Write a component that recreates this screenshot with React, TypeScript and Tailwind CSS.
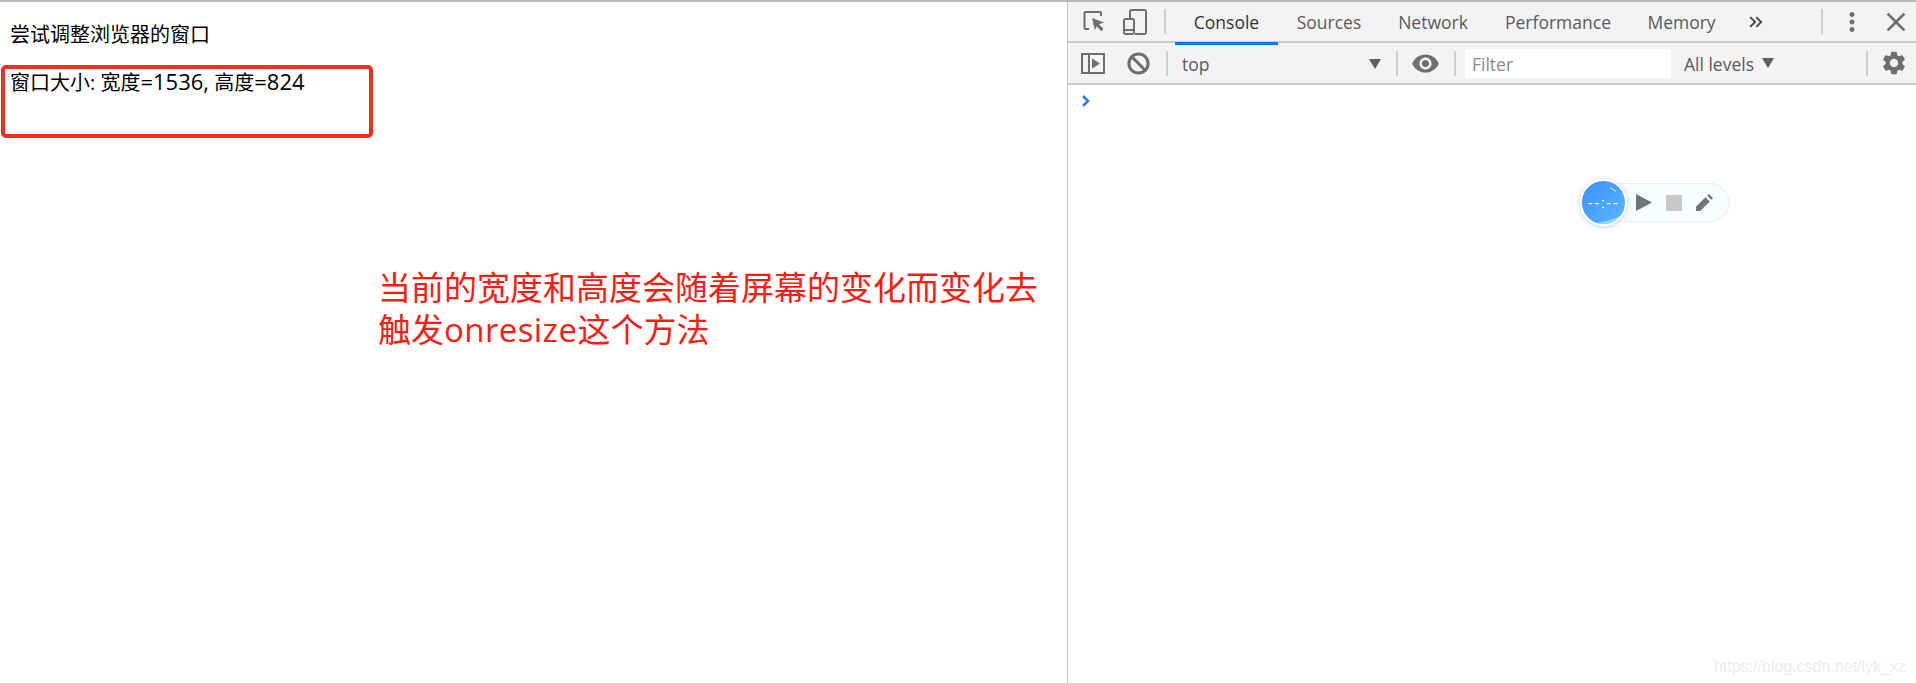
import { Ban } from "lucide-react";
import { MdClose, MdKeyboardDoubleArrowRight, MdMoreVert, MdSettings, MdVisibility } from "react-icons/md";

const font = "font-['Open_Sans','Noto_Sans_CJK_SC',sans-serif]";

function Sep({ className }: { className: string }) {
  return <div className={`h-[25px] w-0.5 shrink-0 bg-[#cfcfcf] ${className}`} />;
}

function Tab({ label, active, width }: { label: string; active?: boolean; width: string }) {
  return (
    <div
      className={`flex h-[43px] shrink-0 items-center justify-center border-b-[3px] text-[17.5px] ${width} ${
        active ? "border-[#1a73e8] text-[#333]" : "border-transparent text-[#5a5a5a]"
      }`}
    >
      {label}
    </div>
  );
}

function InspectIcon() {
  return (
    <svg width="22" height="24" viewBox="0 0 22 24" fill="none" className="shrink-0">
      <path d="M6 19H2.500A1 1 0 0 1 1.500 18V3A1 1 0 0 1 2.500 2H17A1 1 0 0 1 18 3V6" stroke="#6e6e6e" strokeWidth="2" />
      <path d="M9 8l12 4.500-5 1.700 4.500 4.800-2.200 2.200-4.600-5L12 20z" fill="#6e6e6e" />
    </svg>
  );
}

function DeviceIcon() {
  return (
    <svg width="24" height="26" viewBox="0 0 24 26" fill="none" className="shrink-0">
      <path d="M7 9V2.500A1.500 1.500 0 0 1 8.500 1h13A1.500 1.500 0 0 1 23 2.500v21a1.500 1.500 0 0 1-1.500 1.500H12" stroke="#6e6e6e" strokeWidth="2" />
      <rect x="1" y="10" width="10" height="15" rx="1.500" stroke="#6e6e6e" strokeWidth="2" />
      <path d="M1 21h10" stroke="#6e6e6e" strokeWidth="2" />
    </svg>
  );
}

function DrawerIcon() {
  return (
    <svg width="24" height="21" viewBox="0 0 24 21" fill="none" className="shrink-0">
      <rect x="1" y="1" width="22" height="19" stroke="#6e6e6e" strokeWidth="2" />
      <path d="M8 1v19" stroke="#6e6e6e" strokeWidth="2" />
      <path d="M11 5.500l8 5-8 5z" fill="#6e6e6e" />
    </svg>
  );
}

function Recorder() {
  return (
    <div className="absolute left-[512px] top-[84px] flex h-[47px] w-[150px] items-center">
      <div className="absolute left-[20px] top-[4px] flex h-[39px] w-[130px] items-center rounded-full border border-[#e6edf5] bg-[#f8fbff] pl-[35px]">
        <svg width="16" height="17" viewBox="0 0 17 18" className="shrink-0">
          <path d="M0 0l17 9-17 9z" fill="#6f7480" />
        </svg>
        <div className="ml-[14px] h-4 w-4 shrink-0 bg-[#c8c8c8]" />
        <svg width="17" height="17" viewBox="0 0 18 18" className="ml-[14px] shrink-0">
          <path d="M0 18v-4.500L10 3.500l4.500 4.500L4.500 18zM12 1.500l1.500-1.500 4.500 4.500L16 6z" fill="#6f7480" />
        </svg>
      </div>
      <div className="relative flex h-[47px] w-[47px] items-center justify-center overflow-hidden rounded-full border-2 border-white bg-gradient-to-br from-[#3b8dff] to-[#5cb8ff] shadow-[0_1px_5px_rgba(60,120,200,0.35)]">
        <svg width="43" height="43" viewBox="0 0 43 43" className="absolute inset-0">
          <path d="M10 43C18 41 28 40 38 35v8z" fill="#8fe0ff" />
          <path d="M28 6.500l6 4" stroke="#dcecff" strokeWidth="1" />
        </svg>
        <span className="relative font-['Liberation_Sans',sans-serif] text-[15px] font-light leading-none tracking-[1.500px] text-white">--:--</span>
      </div>
    </div>
  );
}

export default function App() {
  return (
    <div className={`flex h-[683px] w-[1916px] overflow-hidden border-t-2 border-[#b8b8b8] bg-white ${font}`}>
      <main className="relative h-full w-[1067px] shrink-0 text-black">
        <p className="ml-[10px] mt-[19px] h-[28px] text-[20px] leading-[28px]">尝试调整浏览器的窗口</p>
        <div className="ml-px mt-[16px] h-[73px] w-[372px] rounded-[5px] border-4 border-[#fb2a1f] pl-[5px] text-[20px] leading-[24px]">
          窗口大小: 宽度<span className="text-[22px]">=1536,</span> 高度<span className="text-[22px]">=824</span>
        </div>
        <p className="ml-[378px] mt-[129px] w-[680px] text-[33px] leading-[42px] text-[#ff1a12]">
          当前的宽度和高度会随着屏幕的变化而变化去
          <br />
          触发<span className="tracking-[0.4px]">onresize</span>这个方法
        </p>
      </main>

      <section className={`relative h-full min-w-0 flex-1 border-l border-[#c4c4c4] ${font}`}>
        <header className="flex h-[41px] items-center border-b-2 border-[#cccccc] bg-[#f3f3f3]">
          <div className="ml-[15px]">
            <InspectIcon />
          </div>
          <div className="ml-[18px]">
            <DeviceIcon />
          </div>
          <Sep className="ml-[17px]" />
          <div className="ml-[9px] flex self-start">
            <Tab label="Console" active width="w-[103px]" />
            <Tab label="Sources" width="w-[102px]" />
            <Tab label="Network" width="w-[106px]" />
            <Tab label="Performance" width="w-[144px]" />
            <Tab label="Memory" width="w-[103px]" />
          </div>
          <MdKeyboardDoubleArrowRight className="ml-[12px] shrink-0 text-[#444]" size={22} />
          <Sep className="ml-[54px]" />
          <MdMoreVert className="ml-[14px] shrink-0 text-[#6e6e6e]" size={30} />
          <MdClose className="ml-[13px] shrink-0 text-[#6e6e6e]" size={32} />
        </header>

        <div className="flex h-[42px] items-center border-b-2 border-[#cccccc] bg-[#f3f3f3]">
          <div className="ml-[13px]">
            <DrawerIcon />
          </div>
          <Ban className="ml-[22px] shrink-0 text-[#6e6e6e]" size={23} strokeWidth={3.2} />
          <Sep className="ml-[16px]" />
          <div className="ml-[14px] flex w-[199px] shrink-0 items-center justify-between pt-0.5 text-[17.5px] text-[#5a5a5a]">
            <span>top</span>
            <span className="h-0 w-0 border-x-[6px] border-t-[10px] border-x-transparent border-t-[#5f5f5f]" />
          </div>
          <Sep className="ml-[15px]" />
          <MdVisibility className="ml-[13px] shrink-0 text-[#6e6e6e]" size={29} />
          <Sep className="ml-[14px]" />
          <div className="ml-[9px] flex h-[29px] w-[206px] shrink-0 items-center bg-white pl-[7px] pt-0.5 text-[17.5px] text-[#8a8a8a]">
            Filter
          </div>
          <span className="ml-[13px] shrink-0 pt-0.5 text-[17.5px] text-[#5a5a5a]">All levels</span>
          <span className="ml-[8px] h-0 w-0 shrink-0 border-x-[6px] border-t-[10px] border-x-transparent border-t-[#5f5f5f]" />
          <Sep className="ml-[92px]" />
          <MdSettings className="ml-[12px] shrink-0 text-[#6e6e6e]" size={28} />
        </div>

        <div className="relative flex-1">
          <svg width="10" height="12" viewBox="0 0 10 12" className="ml-[13px] mt-[10px]" fill="none">
            <path d="M2 1l5 5-5 5" stroke="#2f7bf6" strokeWidth="2.500" />
          </svg>
          <Recorder />
        </div>

        <span className="absolute bottom-[8px] right-[10px] font-['Liberation_Sans',sans-serif] text-[16px] leading-none text-[#ececec]">
          https://blog.csdn.net/lyk_xz
        </span>
      </section>
    </div>
  );
}
